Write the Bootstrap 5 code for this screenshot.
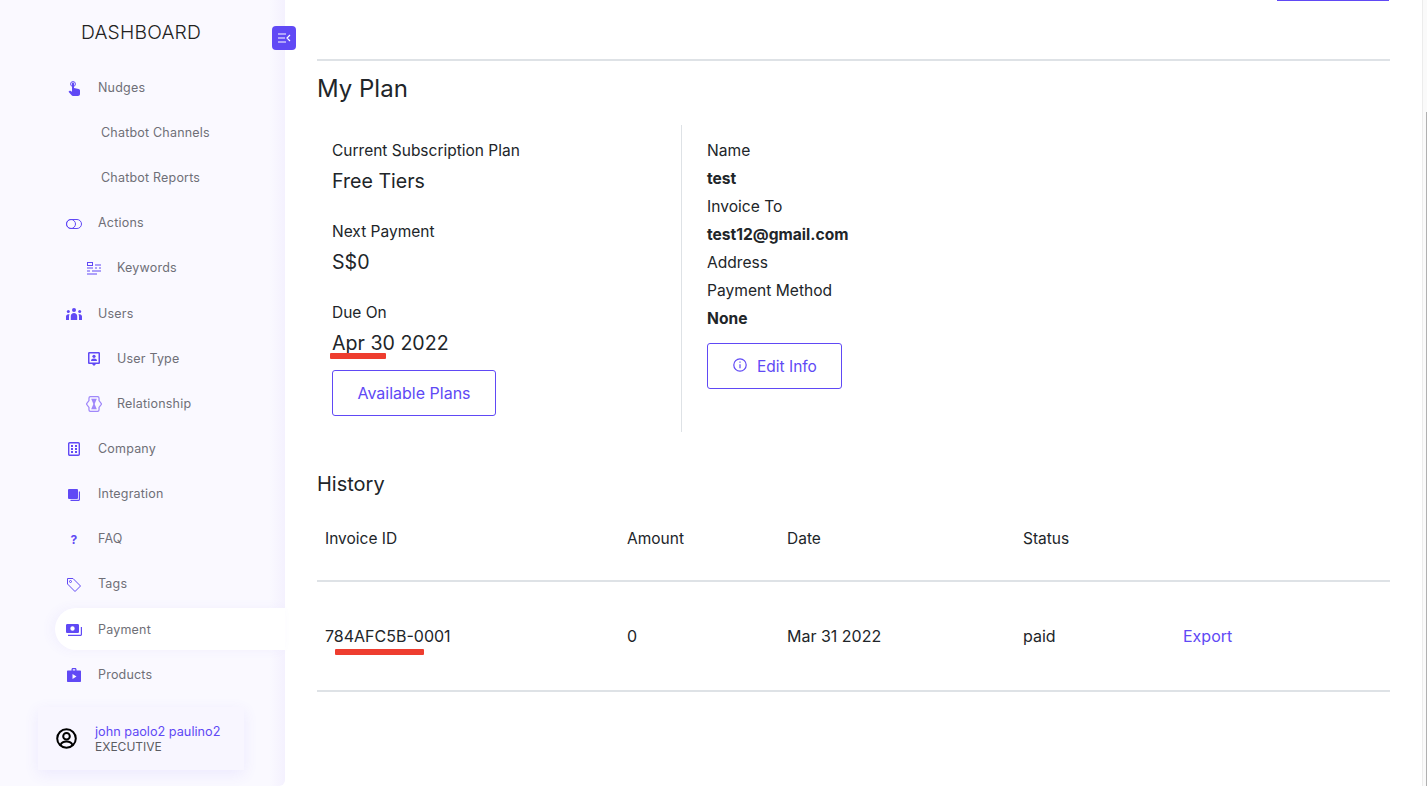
<!DOCTYPE html>
<html lang="en">
<head>
  <meta charset="UTF-8">
  <title>My Plan</title>
  <link href="https://cdn.jsdelivr.net/npm/bootstrap@5.3.0/dist/css/bootstrap.min.css" rel="stylesheet">
  <script src="https://cdn.jsdelivr.net/npm/bootstrap@5.3.0/dist/js/bootstrap.bundle.min.js"></script>
  <style>
    html, body { height: 100%; overflow: hidden; }
    body { background: #fff; font-family: "Inter", "Liberation Sans", sans-serif; color: #212529; }
    .page-wrap { height: 786px; }
    .side-bar { width: 285px; height: 786px; flex: none; background: linear-gradient(90deg, #faf9ff 0, #faf9ff 270px, #f4f1fe 285px); border-radius: 0 0 6px 0; position: relative; }
    .side-title { font-size: 19.3px; line-height: 22px; font-weight: 300; color: #222; text-align: center; padding: 21px 0 0 0; height: 65.555px; width: 282px; letter-spacing: .2px; }
    .toggle-btn { position: absolute; left: 272px; top: 26px; width: 24px; height: 24px; border-radius: 4px; background: #6049f5; display: flex; align-items: center; justify-content: center; }
    .side-menu { padding-left: 55px; }
    .menu-row { height: 45.17px; display: flex; align-items: center; font-size: 12.5px; color: #6f6f77; letter-spacing: .2px; }
    .menu-row svg { flex: none; }
    .ico-main { width: 18px; margin-left: 10px; margin-right: 15px; flex: none; display: flex; justify-content: center; height: 18px; align-items: center; }
    .row-sub { padding-left: 30px; }
    .row-sub .ico-main { margin-left: 0; margin-right: 14px; }
    .row-plain { padding-left: 46px; }
    .row-active { background: #fff; border-radius: 21px 0 0 21px; height: 42px; margin: .6px 0 2.57px 0; padding-top: 2px; box-shadow: -4px 0 12px rgba(96, 73, 245, .05); }
    .faq-mark { color: #6049f5; font-weight: 700; font-size: 12px; }
    .user-box { position: absolute; left: 38px; top: 707px; width: 206px; height: 63px; background: #f8f6ff; box-shadow: 0 4px 14px rgba(96, 73, 245, .09); display: flex; align-items: center; padding-left: 18px; gap: 18px; }
    .user-name { font-size: 12.7px; line-height: 15px; color: #6049f5; }
    .user-role { font-size: 12px; line-height: 15px; color: #5c5c62; }
    .main-area { flex: 1; padding: 0 37px 0 32px; min-width: 0; position: relative; }
    .top-tab { position: absolute; left: 992px; top: 0; width: 112px; height: 1px; background: #6049f5; }
    .top-gap { height: 59px; }
    .rule-line { border-top: 2px solid #dee2e6; }
    .plan-title { font-size: 24px; line-height: 30px; font-weight: 400; margin: 13px 0 21px 0; }
    .plan-left { width: 365px; padding: 15px 15px 0 15px; height: 307px; border-right: 1px solid #dee2e6; }
    .plan-right { padding: 12px 25px 0 25px; }
    .lbl { font-size: 15.5px; line-height: 22px; }
    .val { font-size: 19.6px; line-height: 28px; margin-bottom: 26px; margin-top: 5px; }
    .val-last { margin-bottom: 0; }
    .info-line { font-size: 15.6px; line-height: 28px; }
    .btn-plan { --bs-btn-color: #6049f5; --bs-btn-border-color: #6049f5; --bs-btn-hover-bg: #6049f5; --bs-btn-hover-border-color: #6049f5; --bs-btn-padding-x: 24px; --bs-btn-padding-y: 0; --bs-btn-font-size: 16px; --bs-btn-border-radius: 3px; height: 46px; display: inline-flex; align-items: center; }
    .btn-top-a { margin-top: 13px; width: 164px; justify-content: center; }
    .btn-top-b { margin-top: 10px; width: 135px; padding-left: 25px; padding-top: 2px; gap: 10px; font-size: 15.5px; }
    .hist-title { font-size: 20px; line-height: 26px; margin: 39px 0 0 0; font-weight: 400; }
    .hist-row { display: flex; align-items: center; border-bottom: 2px solid #dee2e6; }
    .hist-head { height: 85px; font-size: 15.5px; }
    .hist-body { height: 110px; font-size: 16px; }
    .c-id { width: 310px; padding-left: 8px; }
    .c-am { width: 160px; }
    .c-da { width: 236px; }
    .c-st { width: 160px; }
    .export-link { color: #6049f5; text-decoration: none; }
    .mark-red { position: absolute; height: 6px; background: #ee3d2f; border-radius: 1px; }
    .mark-one { left: 45px; top: 353px; width: 56px; }
    .mark-two { left: 50px; top: 649px; width: 89px; }
    .scroll-edge { position: absolute; right: 0; top: 0; width: 5px; height: 786px; border-left: 1px solid #ececec; background: #fafafa; }
    .scroll-thumb { position: absolute; right: 0; top: 112px; width: 1px; height: 674px; background: #b0b0b0; }
  </style>
</head>
<body>
  <div class="d-flex page-wrap">
    <div class="side-bar">
      <div class="side-title">DASHBOARD</div>
      <div class="toggle-btn">
        <svg width="14" height="12" viewBox="0 0 14 12" fill="none" stroke="#fff" stroke-width="1.2"><path d="M1 2h8M1 6h7M1 10h8M13 3l-3 3 3 3"/></svg>
      </div>
      <div class="side-menu">
        <div class="menu-row"><span class="ico-main"><svg width="12" height="15" viewBox="0 0 12 15" fill="#6049f5"><circle cx="5" cy="3" r="2.400" fill="none" stroke="#6049f5" stroke-width="1"/><path d="M4 2.500a1 1 0 0 1 2 0V7l4.600 1c.8.200 1.400.8 1.400 1.600V13c0 1.100-.9 2-2 2H5c-.6 0-1.100-.3-1.400-.7L.5 10.800l.8-.8c.4-.4 1-.4 1.400-.1L4 10.800z"/></svg></span>Nudges</div>
        <div class="menu-row row-plain">Chatbot Channels</div>
        <div class="menu-row row-plain">Chatbot Reports</div>
        <div class="menu-row"><span class="ico-main"><svg width="16" height="10" viewBox="0 0 16 10" fill="none" stroke="#6049f5" stroke-width="1"><rect x=".5" y=".5" width="15" height="9" rx="4.500"/><circle cx="5" cy="5" r="4.500"/></svg></span>Actions</div>
        <div class="menu-row row-sub"><span class="ico-main"><svg width="14" height="13" viewBox="0 0 14 13" fill="none" stroke="#6049f5" stroke-width="1"><rect x=".5" y=".5" width="5" height="3"/><path d="M0 6h6M8 3h6M8 6h2M12 6h2M0 9h3M5 9h9M0 12h10"/></svg></span>Keywords</div>
        <div class="menu-row"><span class="ico-main"><svg width="16" height="12" viewBox="0 0 16 12" fill="#6049f5"><circle cx="8" cy="2" r="2"/><circle cx="2.300" cy="3.500" r="1.500"/><circle cx="13.700" cy="3.500" r="1.500"/><path d="M4.800 12V8c0-1.600 1.400-3 3.200-3s3.200 1.400 3.200 3v4zM0 12V8.500c0-1.300 1-2.300 2.300-2.300.5 0 1 .1 1.300.4-.4.500-.6 1.100-.6 1.800V12zM16 12V8.500c0-1.300-1-2.300-2.300-2.300-.5 0-1 .1-1.300.4.400.5.600 1.100.6 1.800V12z"/></svg></span>Users</div>
        <div class="menu-row row-sub"><span class="ico-main"><svg width="12" height="14" viewBox="0 0 12 14" fill="#6049f5"><path fill-rule="evenodd" d="M1.300 0h9.400C11.400 0 12 .6 12 1.300v9.400c0 .7-.6 1.300-1.300 1.300H8l-2 2-2-2H1.300C.6 12 0 11.400 0 10.700V1.300C0 .6.600 0 1.300 0zm.2 1.500v9h9v-9z"/><circle cx="6" cy="4.300" r="1.600"/><path d="M3 9c0-1.600 1.300-2.400 3-2.400S9 7.400 9 9z"/></svg></span>User Type</div>
        <div class="menu-row row-sub"><span class="ico-main"><svg width="16" height="16" viewBox="1 1 14 14" fill="none" stroke="#a088fa" stroke-width="1.100"><path d="M5 1.500h6c.9 0 1.400.5 1.400 1.400V5L14.600 8l-2.200 3v2.100c0 .9-.5 1.400-1.400 1.400H5c-.9 0-1.400-.5-1.400-1.400V11L1.400 8l2.200-3V2.900c0-.9.500-1.400 1.400-1.400z"/><path d="M5.500 3.500h5L8.700 7.500v1l1.800 4h-5l1.800-4v-1z" fill="#a088fa" stroke="none"/></svg></span>Relationship</div>
        <div class="menu-row"><span class="ico-main"><svg width="12" height="14" viewBox="0 0 12 14"><rect x=".7" y=".7" width="10.600" height="12.600" rx="1" fill="none" stroke="#6049f5" stroke-width="1.400"/><path d="M3 3h2v2H3zM7 3h2v2H7zM3 6h2v2H3zM7 6h2v2H7zM3 9h2v2H3zM7 9h2v2H7z" fill="#6049f5"/></svg></span>Company</div>
        <div class="menu-row"><span class="ico-main"><svg width="12" height="12" viewBox="0 0 12 12" fill="#6049f5"><rect width="10" height="10" rx="1"/><path d="M10.800 2.500H12V10.500c0 .8-.7 1.500-1.500 1.500H2.500v-1.200h8.300z"/></svg></span>Integration</div>
        <div class="menu-row"><span class="ico-main"><span class="faq-mark">?</span></span>FAQ</div>
        <div class="menu-row"><span class="ico-main"><svg width="14" height="14" viewBox="0 0 14 14" fill="none" stroke="#6049f5" stroke-width="1"><path d="M.5 .5h5.500l7.500 7.500-5.500 5.500L.5 6z" stroke-linejoin="round"/><circle cx="3.500" cy="3.500" r="1"/></svg></span>Tags</div>
        <div class="menu-row row-active"><span class="ico-main"><svg width="16" height="12" viewBox="0 0 16 12" fill="#6049f5"><path fill-rule="evenodd" d="M1.300 0h10.400c.7 0 1.300.6 1.300 1.300v6.400c0 .7-.6 1.300-1.300 1.300H1.300C.6 9 0 8.400 0 7.700V1.300C0 .6.600 0 1.300 0zm5.200 2.300a2.200 2.200 0 1 0 0 4.400 2.200 2.200 0 0 0 0-4.400z"/><path d="M14.800 3H16v7.500c0 .8-.7 1.500-1.500 1.500H2v-1.200h12.800z"/></svg></span>Payment</div>
        <div class="menu-row"><span class="ico-main"><svg width="14" height="14" viewBox="0 0 14 14" fill="#6049f5"><path fill-rule="evenodd" d="M4.500 2.500V1.300C4.500.6 5.100 0 5.800 0h2.400c.7 0 1.300.6 1.300 1.300v1.200H13c.6 0 1 .4 1 1V13c0 .6-.4 1-1 1H1c-.6 0-1-.4-1-1V3.500c0-.6.4-1 1-1zm1.300 0h2.400V1.300H5.800zM5.500 6v5l4-2.500z"/></svg></span>Products</div>
      </div>
      <div class="user-box">
        <svg width="21" height="21" viewBox="0 0 21 21" fill="none" stroke="#000" stroke-width="2"><circle cx="10.500" cy="10.500" r="9.300"/><circle cx="10.500" cy="8.300" r="3.300"/><path d="M4.500 17c1-2.500 3.200-3.500 6-3.500s5 1 6 3.500"/></svg>
        <div>
          <div class="user-name">john paolo2 paulino2</div>
          <div class="user-role">EXECUTIVE</div>
        </div>
      </div>
    </div>
    <div class="main-area">
      <div class="top-tab"></div>
      <div class="top-gap"></div>
      <div class="rule-line"></div>
      <h3 class="plan-title">My Plan</h3>
      <div class="d-flex">
        <div class="plan-left">
          <div class="lbl">Current Subscription Plan</div>
          <div class="val">Free Tiers</div>
          <div class="lbl">Next Payment</div>
          <div class="val">S$0</div>
          <div class="lbl">Due On</div>
          <div class="val val-last">Apr 30 2022</div>
          <button class="btn btn-plan btn-top-a" type="button">Available Plans</button>
        </div>
        <div class="plan-right">
          <div class="info-line">Name</div>
          <div class="info-line fw-bold">test</div>
          <div class="info-line">Invoice To</div>
          <div class="info-line fw-bold">test12@gmail.com</div>
          <div class="info-line">Address</div>
          <div class="info-line">Payment Method</div>
          <div class="info-line fw-bold">None</div>
          <button class="btn btn-plan btn-top-b" type="button">
            <svg class="mb-1" width="14" height="14" viewBox="0 0 14 14" fill="none" stroke="#6049f5" stroke-width="1.200"><circle cx="7" cy="7" r="6.200"/><path d="M7 6.200v4M7 3.600v1.200"/></svg>
            Edit Info</button>
        </div>
      </div>
      <h4 class="hist-title">History</h4>
      <div class="hist-row hist-head">
        <div class="c-id">Invoice ID</div><div class="c-am">Amount</div><div class="c-da">Date</div><div class="c-st">Status</div>
      </div>
      <div class="hist-row hist-body">
        <div class="c-id">784AFC5B-0001</div><div class="c-am">0</div><div class="c-da">Mar 31 2022</div><div class="c-st">paid</div><a class="export-link" href="#">Export</a>
      </div>
      <div class="mark-red mark-one"></div>
      <div class="mark-red mark-two"></div>
    </div>
    <div class="scroll-edge"><div class="scroll-thumb"></div></div>
  </div>
</body>
</html>
